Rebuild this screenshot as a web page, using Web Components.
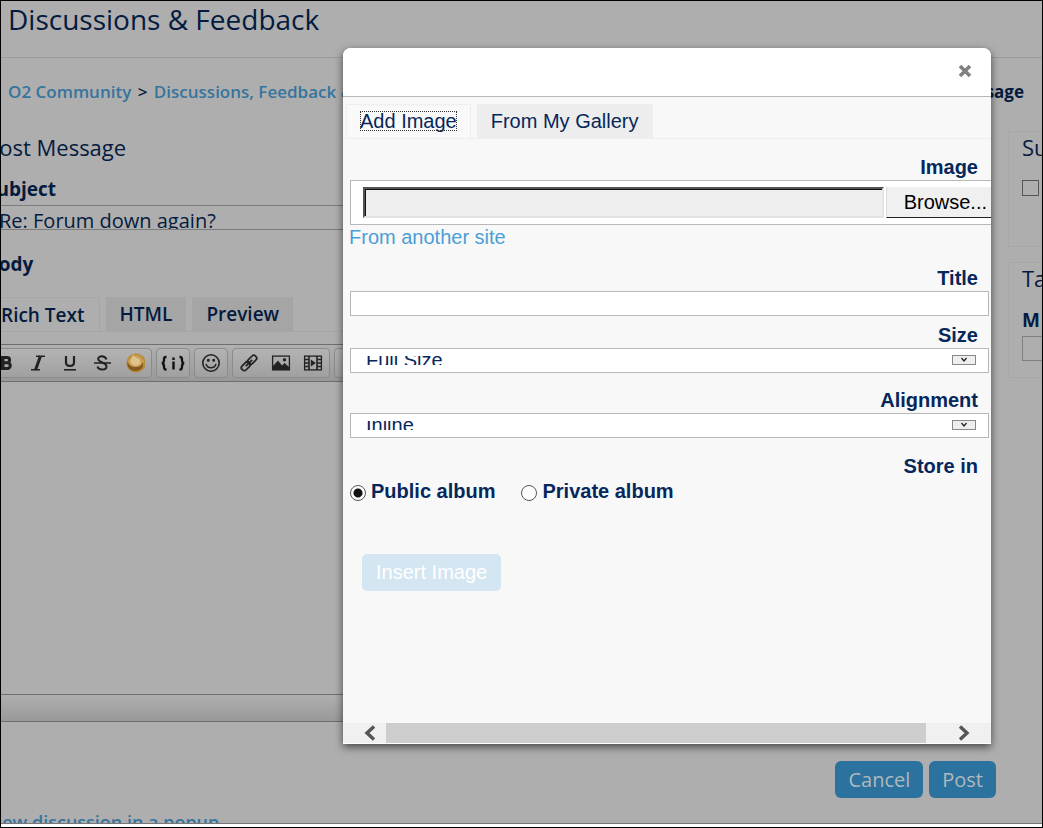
<!DOCTYPE html>
<html lang="en">
<head>
<meta charset="utf-8">
<title>Discussions &amp; Feedback</title>
<style>
  html, body { height: 100%; margin: 0; }
  body {
    --ink: #041b3f;
    --link: #36749d;
    --shade: #aeaeae;
    --navy: #06275c;
    font-family: "Open Sans", "Noto Sans", sans-serif;
    color: var(--ink);
  }
</style>
</head>
<body>
<forum-page></forum-page>

<template id="t-page">
  <style>
    :host { display: flex; flex-direction: column; position: relative; height: 100vh; box-sizing: border-box; border: 1px solid #000; background: #fff; overflow: hidden; }
    .view { flex: 1; min-height: 0; overflow: hidden; background: var(--shade); border-bottom: 1px solid #777; margin-bottom: 3px; }
    header { height: 56px; border-bottom: 1px solid #9b9b9b; padding-left: 7px; box-sizing: content-box; }
    h1 { margin: 0; font-size: 28px; line-height: 37px; font-weight: 400; white-space: nowrap; }
    nav { display: flex; justify-content: space-between; padding: 0 18px 0 7px; margin-top: 22px; font-size: 17px; line-height: 24px; font-weight: 600; white-space: nowrap; }
    nav i { font-style: normal; margin: 0 2px; }
    a { color: var(--link); text-decoration: none; }
    b { font-weight: 700; }
    .cols { display: grid; grid-template-columns: minmax(0, 1fr) 34px; column-gap: 16px; margin-top: 27px; }
    .layer { position: absolute; inset: 0; display: flex; padding: 47px 51px 83px 342px; }
    image-dialog { flex: 1; }
  </style>
  <div class="view">
    <header><h1>Discussions &amp; Feedback</h1></header>
    <nav aria-label="Breadcrumb">
      <span><a href="#">O2 Community</a> <i>&gt;</i> <a href="#">Discussions, Feedback &amp;</a></span>
      <b>Message</b>
    </nav>
    <div class="cols">
      <post-form></post-form>
      <side-bar></side-bar>
    </div>
  </div>
  <div class="layer"><image-dialog></image-dialog></div>
</template>

<template id="t-form">
  <style>
    :host { display: block; margin-left: -15px; white-space: nowrap; }
    h2 { margin: 0; font-size: 22px; line-height: 32px; font-weight: 400; }
    label { display: block; font-size: 19px; line-height: 24px; font-weight: 700; }
    .subject { margin-top: 14px; }
    input { display: block; box-sizing: border-box; width: 98%; height: 25px; margin-top: 4px; padding: 6px 0 0 12px; border: 1px solid #7d7d7d; background: transparent; color: inherit; font: 400 20px/24px "Open Sans", sans-serif; }
    .body { margin-top: 22px; }
    .tabs { display: flex; gap: 6px; margin-top: 21px; width: 98%; border-bottom: 1px solid #a6a6a6; }
    .tabs button { height: 34px; padding: 0 14px; border: 0; background: #a5a5a5; color: inherit; font: 600 19px/24px "Open Sans", sans-serif; }
    .tabs .on { background: var(--shade); border: 1px solid #a6a6a6; border-bottom: 0; }
    rich-editor { margin-top: 12px; width: 98%; }
    .actions { display: flex; justify-content: flex-end; gap: 6px; margin: 39px -4px 0 0; }
    .actions button { height: 37px; padding: 0 13px; border: 0; border-radius: 6px; background: #2b729f; color: #b0b8bd; font: 400 20px/26px "Open Sans", sans-serif; }
    a { display: block; margin-top: 12px; color: var(--link); text-decoration: none; font-size: 18px; line-height: 24px; font-weight: 600; }
  </style>
  <h2>Post Message</h2>
  <label class="subject" for="s">Subject</label>
  <input id="s" type="text" value="Re: Forum down again?">
  <label class="body">Body</label>
  <div class="tabs"><button class="on">Rich Text</button><button>HTML</button><button>Preview</button></div>
  <rich-editor></rich-editor>
  <div class="actions"><button>Cancel</button><button>Post</button></div>
  <a href="#">View discussion in a popup</a>
</template>

<template id="t-editor">
  <style>
    :host { display: block; border: 1px solid #6f6f6f; box-sizing: border-box; }
    .bar { display: flex; gap: 4px; padding: 3px 0 3px 2px; border-bottom: 1px solid #6f6f6f; background: linear-gradient(#b0b0b0, #989898); }
    .group { display: flex; border: 1px solid #8b8b8b; border-radius: 4px; background: linear-gradient(#b3b3b3, #a0a0a0); }
    .group:first-child { padding-right: 1px; }
    button { width: 32px; height: 28px; padding: 0; border: 0; background: none; color: #222; display: grid; place-items: center; }
    svg { display: block; width: 20px; height: 20px; }
    textarea { display: block; width: 100%; height: 312px; box-sizing: border-box; border: 0; background: var(--shade); resize: none; }
    .foot { height: 26px; border-top: 1px solid #6f6f6f; background: linear-gradient(#afafaf, #999); }
  </style>
  <div class="bar" role="toolbar" aria-label="Formatting">
    <div class="group">
      <button aria-label="Bold"><svg viewBox="0 0 20 20" fill="none" stroke="currentColor" stroke-width="3"><path d="M6 4.500h5a2.600 2.600 0 0 1 0 5.200H7h5a3 3 0 0 1 0 5.800H6zM7 4v12"/></svg></button>
      <button aria-label="Italic"><svg viewBox="0 0 20 20" fill="none" stroke="currentColor"><path d="M8 3.200h9M3 16.800h9" stroke-width="1.400"/><path d="M12.500 3l-5 14" stroke-width="3"/></svg></button>
      <button aria-label="Underline"><svg viewBox="0 0 20 20" fill="none" stroke="currentColor"><path d="M6 3v6.500c0 4.500 8 4.500 8 0V3" stroke-width="2.200"/><path d="M4 16.800h12" stroke-width="1.600"/></svg></button>
      <button aria-label="Strikethrough"><svg viewBox="0 0 20 20" fill="none" stroke="currentColor"><path d="M14.500 6.500C13 2 6 2.500 6.200 6c.2 4 8.300 3 8.300 7.500 0 4-8 4-9 0" stroke-width="2"/><path d="M2 10h17" stroke-width="1.500"/></svg></button>
      <button aria-label="Insert special"><svg viewBox="0 0 22 22" style="width:22px;height:22px"><circle cx="13" cy="11" r="9.600" fill="#b78a38"/><circle cx="13" cy="11" r="8" fill="#c99f50"/><path d="M4.500 10c-1 6 3.500 9 8 9s9-3 7.500-9c-1 3-3.500 5-7.500 5s-6.500-2-8-5z" fill="#85591f"/><path d="M10 1.500c1 3 2 3.500 4.500 4.500 4 1.500 4 7-1 7.500C8.500 14 6.500 10 8 7c1-2 2.500-3 2-5.500z" fill="#dfc38c"/></svg></button>
    </div>
    <div class="group"><button aria-label="Insert code"><svg viewBox="0 0 24 20" style="width:24px" fill="none" stroke="#111" stroke-width="2.400"><path d="M5.500 4H5c-2 0-2 1-2 3s0 2.500-2 3c2 .5 2 1.500 2 3.500s0 3 2 3h.5M18.500 4h.5c2 0 2 1 2 3s0 2.500 2 3c-2 .5-2 1.500-2 3.500s0 3-2 3h-.5M12.500 8.500V16.500M12.500 4.500v2.400"/></svg></button></div>
    <div class="group"><button aria-label="Smiley"><svg viewBox="0 0 20 20" fill="none" stroke="currentColor" stroke-width="1.600"><circle cx="10" cy="10" r="8.200"/><path d="M5 11c1.500 5 8.500 5 10 0" stroke-width="1.500"/><circle cx="7.300" cy="7.300" r=".7" fill="currentColor"/><circle cx="12.700" cy="7.300" r=".7" fill="currentColor"/></svg></button></div>
    <div class="group">
      <button aria-label="Link"><svg viewBox="0 0 20 20" fill="none" stroke="currentColor" stroke-width="1.700"><g transform="rotate(-45 10 10)"><rect x="0.500" y="7.200" width="10" height="5.600" rx="2.400"/><rect x="9.500" y="7.200" width="10" height="5.600" rx="2.400"/><path d="M5.500 10h9"/></g></svg></button>
      <button aria-label="Image"><svg viewBox="0 0 20 20"><rect x="1.600" y="3.100" width="16.800" height="13.800" fill="none" stroke="currentColor" stroke-width="1.300"/><path d="M2 17v-4l5-5.500 4 5 2.500-2.500L18 14v3z" fill="currentColor"/><circle cx="13.500" cy="6.800" r="1.700" fill="currentColor"/></svg></button>
      <button aria-label="Video"><svg viewBox="0 0 20 20" fill="none" stroke="currentColor" stroke-width="1.300"><rect x="1.600" y="3.100" width="16.800" height="13.800"/><path d="M6 3v14M14 3v14M2 6.500h4M2 10h4M2 13.500h4M14 6.500h4M14 10h4M14 13.500h4" stroke-width="1.600"/><path d="M7.800 6.500v7l5-3.500z" fill="currentColor" stroke="none"/></svg></button>
    </div>
    <div class="group"><button aria-label="More"></button></div>
  </div>
  <textarea aria-label="Message body"></textarea>
  <div class="foot"></div>
</template>

<template id="t-side">
  <style>
    :host { display: block; overflow: hidden; white-space: nowrap; }
    section { box-sizing: border-box; height: 116px; padding-left: 13px; margin-bottom: 15px; border: 1px solid #a8a8a8; }
    h2 { margin: 0; font-size: 22px; line-height: 30px; font-weight: 400; }
    label { font-size: 19px; line-height: 24px; font-weight: 700; display: block; margin-top: 15px; }
    input { appearance: none; display: block; margin: 18px 0 0; width: 17px; height: 16px; border: 1px solid #555; background: none; border-radius: 0; padding: 0; box-sizing: border-box; }
    input[type=text] { width: 60px; height: 25px; margin-top: 4px; border-color: #808080; }
  </style>
  <section><h2>Su</h2><input type="checkbox" aria-label="Subscribe"></section>
  <section><h2>Ta</h2><label for="m">M</label><input id="m" type="text"></section>
</template>

<template id="t-dialog">
  <style>
    :host { display: flex; flex-direction: column; box-sizing: border-box; border-radius: 8px 8px 0 0; background: #f8f8f8; overflow: hidden; box-shadow: 0 3px 8px rgba(0,0,0,.6); color: var(--navy); font: 20px/24px "Liberation Sans", Arial, sans-serif; white-space: nowrap; }
    header { flex: none; height: 48px; display: flex; align-items: center; justify-content: flex-end; padding-right: 17px; background: #fff; border-bottom: 1px solid #b8b8b8; }
    header button { width: 18px; height: 18px; padding: 0; border: 0; background: none; margin-bottom: 2px; }
    svg { display: block; }
    .tabs { display: flex; gap: 6px; padding: 7px 0 0 3px; border-bottom: 1px solid #eee; }
    .tabs button { height: 34px; padding: 0 14px; border: 0; background: #ededed; color: inherit; font: inherit; }
    .tabs .on { padding: 0 13px 1px; background: #f9f9f9; border: 1px solid #eee; border-bottom: 0; }
    .on span { display: block; width: max-content; line-height: 20px; outline: 1px dotted #333; outline-offset: -1px; }
    form { flex: 1; padding: 16px 0 0 7px; }
    .file { box-sizing: border-box; display: flex; gap: 2px; height: 45px; padding: 6px 0 6px 12px; border: 1px solid #b8b8b8; border-right: 0; background: #fff; }
    .file input { flex: 1; min-width: 0; box-sizing: border-box; height: 31px; padding: 0; border: 2px solid; border-color: #555 #e3e3e3 #e3e3e3 #555; border-radius: 0; box-shadow: inset 1px 1px #111; background: #efefef; }
    .file button { flex: none; height: 31px; padding: 0 4px 0 17px; border: 0; border-bottom: 1px solid #222; border-left: 1px solid #ddd; background: #f0f0f0; color: #000; font: inherit; }
    a { color: #4a9fd6; text-decoration: none; display: block; margin: 0 0 17px -1px; }
    .text { display: block; box-sizing: border-box; width: calc(100% - 2px); height: 25px; border: 1px solid #b8b8b8; background: #fff; padding: 0 14px; font: inherit; color: inherit; }
    .radios { display: flex; gap: 26px; font-weight: 700; }
    .radios label { display: flex; gap: 5px; align-items: center; }
    .radios input { appearance: none; margin: 3px 0 0; width: 16px; height: 16px; box-sizing: border-box; border: 1px solid #555; border-radius: 50%; background: #fff; }
    .radios input:checked { background: radial-gradient(circle, #111 4px, #fff 5px); }
    .go { display: block; margin: 51px 0 0 12px; height: 37px; padding: 0 14px 2px; border: 0; border-radius: 5px; background: #d3e6f2; color: #fff; font: inherit; }
    .scroll { flex: none; display: flex; align-items: center; height: 20px; padding: 0 20px; background: #f0f0f0; border-bottom: 1px solid #fff; }
    .thumb { flex: 1; height: 20px; margin: 0 31px 0 9px; background: #cdcdcd; }
  </style>
  <header><button aria-label="Close"><svg width="18" height="18" viewBox="0 0 18 18"><path d="M4 4l10 10M14 4L4 14" stroke="#808080" stroke-width="3.600"/></svg></button></header>
  <div class="tabs"><button class="on"><span>Add Image</span></button><button>From My Gallery</button></div>
  <form>
    <field-row name="Image"><div class="file"><input type="text" aria-label="Image file" readonly><button type="button">Browse...</button></div></field-row>
    <a href="#">From another site</a>
    <field-row name="Title"><input class="text" type="text" aria-label="Title"></field-row>
    <field-row name="Size" style="--gap:7px"><drop-down name="Size" value="Full Size"></drop-down></field-row>
    <field-row name="Alignment" style="--gap:15px"><drop-down name="Alignment" value="Inline"></drop-down></field-row>
    <field-row name="Store in" style="--gap:16px"><div class="radios" role="radiogroup" aria-label="Store in">
      <label><input type="radio" name="album" checked>Public album</label>
      <label><input type="radio" name="album">Private album</label>
    </div></field-row>
    <button class="go" type="button" disabled>Insert Image</button>
  </form>
  <div class="scroll"><svg width="14" height="16" viewBox="0 0 14 16"><path d="M11 1.500L4 8l7 6.500" fill="none" stroke="#555" stroke-width="3.400"/></svg><div class="thumb"></div><svg width="14" height="16" viewBox="0 0 14 16"><path d="M3 1.500L10 8l-7 6.500" fill="none" stroke="#555" stroke-width="3.400"/></svg></div>
</template>

<template id="t-row">
  <style>
    :host { display: block; padding-top: var(--gap, 0); }
    .name { text-align: right; font-weight: 700; padding-right: 13px; line-height: 24px; margin-bottom: 1px; }
  </style>
  <div class="name"></div><slot></slot>
</template>

<template id="t-drop">
  <style>
    :host { display: flex; align-items: center; justify-content: space-between; box-sizing: border-box; width: calc(100% - 2px); height: 25px; padding: 0 12px 0 15px; border: 1px solid #b8b8b8; background: #fff; }
    .clip { display: flex; align-items: center; flex: 1; height: 9px; margin-bottom: 1px; overflow: hidden; }
    select { appearance: none; flex: 1; height: 26px; padding: 0; margin: 0; border: 0; background: none; color: inherit; font: 20px/24px "Liberation Sans", Arial, sans-serif; }
    svg { display: block; margin-bottom: 1px; border: 1px solid #888; background: #eee; }
  </style>
  <div class="clip"><select></select></div>
  <svg width="22" height="8" viewBox="0 0 22 8"><path d="M8.500 2l2.500 3 2.500-3" fill="none" stroke="#222" stroke-width="1.300"/></svg>
</template>

<script>
  class Part extends HTMLElement {
    connectedCallback() {
      if (this.shadowRoot) return;
      this.attachShadow({ mode: "open" });
      this.shadowRoot.append(document.getElementById(this.constructor.tpl).content.cloneNode(true));
      this.fill();
    }
    fill() {}
  }
  customElements.define("drop-down", class extends Part {
    static tpl = "t-drop";
    fill() {
      const s = this.shadowRoot.querySelector("select");
      s.setAttribute("aria-label", this.getAttribute("name"));
      s.add(new Option(this.getAttribute("value")));
    }
  });
  customElements.define("field-row", class extends Part {
    static tpl = "t-row";
    fill() { this.shadowRoot.querySelector(".name").textContent = this.getAttribute("name"); }
  });
  customElements.define("rich-editor", class extends Part { static tpl = "t-editor"; });
  customElements.define("post-form", class extends Part { static tpl = "t-form"; });
  customElements.define("side-bar", class extends Part { static tpl = "t-side"; });
  customElements.define("image-dialog", class extends Part { static tpl = "t-dialog"; });
  customElements.define("forum-page", class extends Part { static tpl = "t-page"; });
</script>
</body>
</html>
